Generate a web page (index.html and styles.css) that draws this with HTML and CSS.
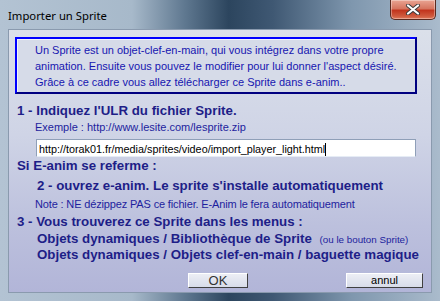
FILE: index.html
```html
<!DOCTYPE html>
<html>
<head>
<meta charset="utf-8">
<link rel="stylesheet" href="styles.css">
</head>
<body>
<div class="window">
  <div class="titlebar">
    <span class="title">Importer un Sprite</span>
    <div class="close">
      <svg width="16" height="11" viewBox="0 0 16 11"><path d="M3 1.5 L13 9.5 M13 1.5 L3 9.5" stroke="#3a3a3a" stroke-width="4" stroke-linecap="round"/><path d="M3 1.5 L13 9.5 M13 1.5 L3 9.5" stroke="#ffffff" stroke-width="2.2" stroke-linecap="round"/></svg>
    </div>
  </div>
  <div class="client">
    <div class="info">
      <p>Un Sprite est un objet-clef-en-main, qui vous intégrez dans votre propre</p>
      <p>animation. Ensuite vous pouvez le modifier pour lui donner l'aspect désiré.</p>
      <p>Grâce à ce cadre vous allez télécharger ce Sprite dans e-anim..</p>
    </div>
    <div class="h1 step1">1 - Indiquez l'ULR du fichier Sprite.</div>
    <div class="small ex">Exemple : http://www.lesite.com/lesprite.zip</div>
    <div class="input">http://torak01.fr/media/sprites/video/import_player_light.html<span class="caret"></span></div>
    <div class="h1 si">Si E-anim se referme :</div>
    <div class="h1 indent step2">2 - ouvrez e-anim. Le sprite s'installe automatiquement</div>
    <div class="small note">Note : NE dézippez PAS ce fichier. E-Anim le fera automatiquement</div>
    <div class="h1 step3">3 - Vous trouverez ce Sprite dans les menus :</div>
    <div class="h1 indent menu1">Objets dynamiques / Bibliothèque de Sprite <span class="aside">(ou le bouton Sprite)</span></div>
    <div class="h1 indent">Objets dynamiques / Objets clef-en-main / baguette magique</div>
    <div class="buttons">
      <div class="btn ok">OK</div>
      <div class="btn cancel">annul</div>
    </div>
  </div>
</div>
</body>
</html>
```
FILE: styles.css
```css
* { box-sizing: border-box; }
html, body { margin: 0; padding: 0; }
body { width: 440px; height: 301px; overflow: hidden; background: #6d7f93; }
.window {
  width: 440px; height: 301px;
  display: flex; flex-direction: column;
  background: linear-gradient(90deg, #b3c3d3 0%, #a7b9ca 30%, #5f7890 42%, #2c455e 52%, #3f5873 62%, #7f97ae 80%, #aabbcc 100%);
}
.titlebar {
  flex: none;
  height: 29px; position: relative;
  display: flex; align-items: center;
  padding: 2px 0 0 8px;
}
.title { font-family: "Noto Sans", "DejaVu Sans", sans-serif; font-size: 11.3px; color: #000; }
.close {
  position: absolute; right: 4px; top: 0;
  width: 46px; height: 20px;
  border: 1px solid #5a2a20; border-top: none;
  border-radius: 0 0 5px 5px;
  background: linear-gradient(180deg, #e9a493 0%, #d67560 45%, #c2351e 55%, #cf5a3e 85%, #e07a5c 100%);
  display: flex; align-items: center; justify-content: center;
  box-shadow: inset 0 0 0 1px rgba(255,255,255,0.35);
}
.client {
  flex: 1; min-height: 0; overflow: hidden;
  margin: 0 8px 8px 8px;
  border: 1px solid #8a9aae;
  background: linear-gradient(180deg, #dbe0ea 0%, #cfd4e6 40%, #bcc0dd 75%, #b2b5d8 100%);
  padding: 7px 5px 0 6px;
  font-family: "Liberation Sans", Arial, sans-serif;
  color: #1b1b8e;
}
.info {
  width: 402px; height: 57px;
  border: 2px solid #0000ff;
  border-right-color: #000080; border-bottom-color: #000080;
  box-shadow: inset 1px 1px 0 #f0f2fa;
  background: #d6dbe8;
  padding: 3px 0 0 18px;
  color: #1616b0;
  font-size: 11px;
}
.info p { margin: 0; line-height: 16px; white-space: nowrap; }
.h1 { font-weight: bold; font-size: 13.3px; line-height: 16px; color: #1e1e88; white-space: nowrap; }
.small { font-size: 11px; line-height: 14px; color: #1e1e9e; white-space: nowrap; }
.step1 { margin: 9px 0 0 2px; }
.ex { margin: 1px 0 0 20px; }
.input {
  margin: 5px 0 0 21px;
  width: 380px; height: 18px;
  background: #fff;
  border: 1px solid #8f9fb8;
  border-bottom-color: #e6ecf5;
  color: #000;
  font-size: 10.8px; line-height: 16px;
  padding: 1px 0 0 2px;
  white-space: nowrap;
}
.caret { display: inline-block; width: 1px; height: 13px; background: #000; vertical-align: -3px; }
.si { margin: 1px 0 0 2px; }
.indent { margin-left: 22px; }
.step2 { margin-top: 4px; }
.note { margin: 3px 0 0 20px; letter-spacing: -0.15px; }
.step3 { margin: 3px 0 0 2px; }
.menu1 { margin-top: 1px; }
.aside { font-weight: normal; font-size: 9.8px; line-height: 10px; margin-left: 4px; color: #1e1e9e; }
.buttons { display: flex; padding-top: 10px; }
.btn {
  height: 15px;
  border: 1px solid #fff; border-right-color: #404040; border-bottom-color: #404040;
  background: linear-gradient(180deg, #eceef5, #d8dce9);
  font-size: 11px; line-height: 13px; text-align: center; color: #000;
}
.ok { margin-left: 173px; width: 60px; font-size: 13px; color: #333; }
.cancel { margin-left: 98px; width: 77px; }
```
